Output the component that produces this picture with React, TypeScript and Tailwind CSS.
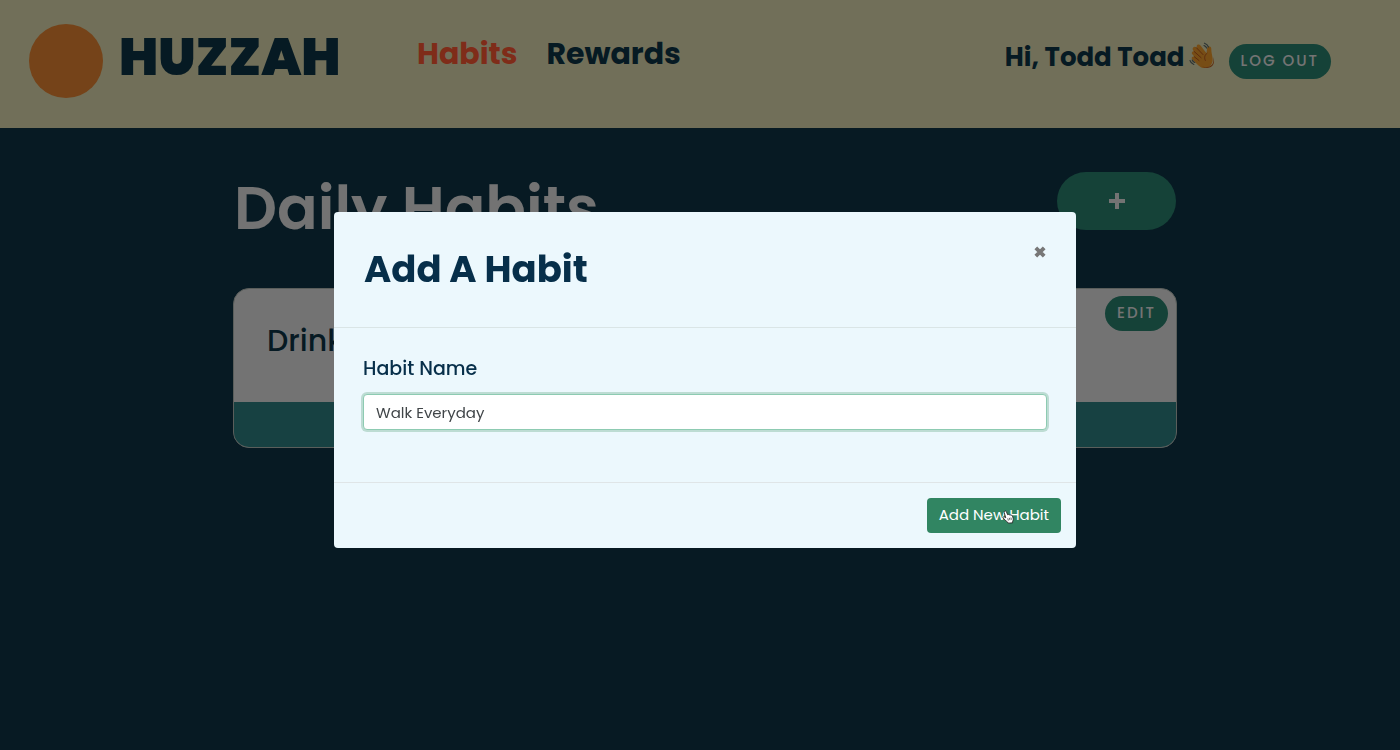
import { useState } from "react";

const pill =
  "h-[35px] rounded-full bg-[#2a8470] px-3 text-[15px] font-medium uppercase tracking-[2px] text-[#e8e8e8]";

function WaveIcon() {
  return (
    <svg viewBox="0 0 28 28" className="h-7 w-7 shrink-0" role="img" aria-label="Waving hand">
      <path
        d="M4.2 5.4c1-1 2.200-.7 3.100.2l1 1-.5-1.500c-.4-1.300.2-2.300 1.300-2.600 1-.2 1.800.2 2.400 1.100l6 7.600.5-4.300c.2-1.600 1.300-2.500 2.500-2.300 1.300.2 1.800 1.100 1.800 2.600 0 2.900.7 5.200 1.200 8.200.7 4.400-.7 8-4.600 9.800-3.500 1.600-6.700.7-9.400-1.800l-6-5.600c-.9-.9-1.100-1.900-.4-2.700.6-.7 1.400-.8 2.300-.3L3.600 12.500c-.9-.8-1.100-1.800-.4-2.600.5-.6 1.200-.8 2-.4L4.300 8.400c-.8-1-.9-2.100-.1-3z"
        fill="#ee9a2a"
      />
      <path
        d="M7.300 5.600l6.700 7M5.200 9.500l6.900 6.200M5.400 14.800l4.700 3.800M18 11.200c-2.500 2-3 4.500-1.700 7.200"
        fill="none"
        stroke="#b8561e"
        strokeWidth="1"
        strokeLinecap="round"
      />
      <path
        d="M24.300 15c.7 4.300 0 7.800-4.100 9.600-3.400 1.500-6.300.6-8.900-1.500 3.300 3.200 6.700 3.700 10 2.200 4-1.800 4.500-6.200 3-10.300z"
        fill="#c2601e"
      />
      <path
        d="M15.500 1.200c1.800.6 3.200 1.900 4 3.700M15 3.500c1.200.5 2.100 1.300 2.700 2.500M1 18.500c.6 1.900 1.900 3.300 3.800 4M3.200 18c.5 1.200 1.400 2 2.500 2.500"
        fill="none"
        stroke="#5a6868"
        strokeWidth="1.200"
        strokeLinecap="round"
      />
    </svg>
  );
}

function PointerIcon() {
  return (
    <svg viewBox="0 0 14 16" className="pointer-events-none absolute left-[75px] top-3 h-[14px] w-3" aria-hidden="true">
      <path
        d="M3.300 1.200c.8-.4 1.600 0 1.900.8l1.300 3.300c.7-.5 1.500-.3 1.900.2.700-.4 1.500-.2 1.900.4.800-.3 1.700 0 1.900.8l.8 2.800c.5 1.700-.4 3-.7 4.200l.1 1.100-5.300.4-.5-1.200c-1.400-.7-2.300-1.700-3.200-2.900L1.300 9.300c-.7-.9.500-1.900 1.400-1.400l1.700 1L2.600 3c-.3-.8 0-1.500.7-1.800z"
        fill="#fff"
        stroke="#222"
        strokeWidth="1"
        strokeLinejoin="round"
      />
      <path d="M6.700 9.500l.7 2.700M8.600 9l.7 2.700M10.400 8.700l.6 2.500" stroke="#222" strokeWidth=".8" fill="none" />
    </svg>
  );
}

function Header() {
  return (
    <header className="flex h-32 items-start bg-[#e2deb2] pl-[29px] pr-[69px] text-[#0c3446]">
      <div className="mt-6 flex w-[388px] shrink-0 items-start gap-4">
        <span className="h-[74px] w-[74px] shrink-0 rounded-full bg-[#ea8632]" />
        <span className="mt-1 text-[52px] font-black leading-[58px]">HUZZAH</span>
      </div>
      <nav className="mt-8 flex gap-[29px] text-3xl font-bold leading-[44px]">
        <a href="#habits" className="text-[#fe5832]">Habits</a>
        <a href="#rewards">Rewards</a>
      </nav>
      <div className="ml-auto mt-9 flex items-start">
        <span className="text-[26px] font-bold leading-[42px]">Hi, Todd Toad</span>
        <span className="ml-1 mt-[6px]"><WaveIcon /></span>
        <button type="button" className={`${pill} ml-3 mt-2`}>Log out</button>
      </div>
    </header>
  );
}

function HabitCard({ name }: { name: string }) {
  return (
    <article className="overflow-hidden rounded-2xl border border-[#b4bcb6] bg-[#e6e6e6]">
      <div className="flex h-[113px] items-start justify-between pl-[33px] pr-2 pt-[7px]">
        <h2 className="mt-6 text-[30px] font-medium leading-[42px] text-[#0c3446]">{name}</h2>
        <button type="button" className={pill}>Edit</button>
      </div>
      <div className="h-[45px] bg-[#2e8284]" />
    </article>
  );
}

export default function App() {
  const [habit, setHabit] = useState("Walk Everyday");
  return (
    <div className="min-h-screen bg-[#0e3446] font-[Poppins,Inter,sans-serif]">
      <Header />
      <main className="pl-[10px]">
        <div className="mx-auto max-w-[944px] pt-[44px]">
          <div className="flex items-start justify-between px-px">
            <h1 className="text-[60px] font-semibold leading-[72px] text-[#e6e6e6]">Daily Habits</h1>
            <button type="button" aria-label="Add habit" className="flex h-[58px] w-[119px] items-center justify-center rounded-full bg-[#2a8470] text-[#e6e6e6]">
              <svg viewBox="0 0 16 16" className="h-4 w-4" aria-hidden="true">
                <path d="M8 0v16M0 8h16" stroke="currentColor" strokeWidth="4" />
              </svg>
            </button>
          </div>
          <div className="mt-11">
            <HabitCard name="Drink Water" />
          </div>
        </div>
      </main>

      <div className="fixed inset-0 flex items-center justify-center bg-black/50 pl-[10px] pt-[10px]">
        <form
          role="dialog"
          aria-labelledby="dialog-title"
          onSubmit={(e) => e.preventDefault()}
          className="w-full max-w-[742px] rounded bg-[#ecf8fd] text-[#072f4a]"
        >
          <div className="flex items-start justify-between border-b border-[#dae5e6] px-[30px] pb-8 pt-8">
            <h2 id="dialog-title" className="text-[37px] font-bold leading-[51px]">Add A Habit</h2>
            <button type="button" aria-label="Close" className="mt-[2px] text-[#777]">
              <svg viewBox="1 1 10 10" className="h-3 w-3" aria-hidden="true">
                <path d="M2.500 2.500l7 7M9.500 2.500l-7 7" stroke="currentColor" strokeWidth="3.200" />
              </svg>
            </button>
          </div>
          <div className="px-[29px] pb-[52px] pt-[26px]">
            <label htmlFor="habit" className="block text-[19px] font-medium leading-[30px]">Habit Name</label>
            <input
              id="habit"
              value={habit}
              onChange={(e) => setHabit(e.target.value)}
              className="mt-[10px] block h-9 w-full rounded border border-[#8dcbb2] bg-white px-3 text-[15px] text-[#404548] outline-none ring-2 ring-[#bddcd3]"
            />
          </div>
          <div className="flex justify-end border-t border-[#dfe5e7] p-[15px]">
            <button type="submit" className="relative h-[35px] rounded bg-[#318562] px-3 text-[15px] text-white">
              Add New Habit
              <PointerIcon />
            </button>
          </div>
        </form>
      </div>
    </div>
  );
}
